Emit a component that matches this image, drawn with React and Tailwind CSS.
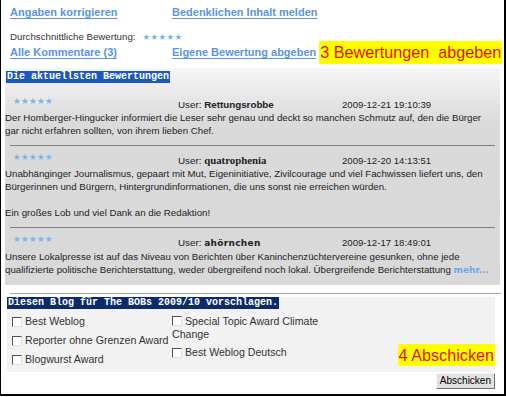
import React from "react";

const Stars = () => (
  <span className="font-['DejaVu_Sans',sans-serif] text-[8.5px] leading-[8px] tracking-[0.4px] text-[#7fb0ee]">
    ★★★★★
  </span>
);

const Comment = ({ user, userClass, date, children, pt = "pt-[5px]", sep = true }) => (
  <div className={pt}>
    <div className="flex items-start">
      <div className="w-[173px] pl-[8px] leading-[8px]">
        <Stars />
      </div>
      <div className="w-[164px] mt-[3px] text-[9.8px] leading-[13px] text-[#222]">
        User: <span className={userClass}>{user}</span>
      </div>
      <div className="mt-[3px] text-[9.6px] leading-[13px] text-[#222]">{date}</div>
    </div>
    <p className="text-[9.7px] leading-[13px] text-[#222] whitespace-nowrap">{children}</p>
    <div className="pb-[8px]" />
    {sep && <div className="mx-[5px] h-px bg-[#7f7f7f]" />}
  </div>
);

const Box = () => (
  <span className="inline-block w-[10px] h-[10px] bg-white border border-t-[#505050] border-l-[#505050] border-b-[#e0e0e0] border-r-[#e0e0e0] align-[-1px]" />
);

const Option = ({ children }) => (
  <label className="flex items-center gap-[3px] h-[13px]">
    <Box />
    <span>{children}</span>
  </label>
);

const linkCls =
  "font-bold text-[11px] leading-[14px] text-[#5a96dc] underline underline-offset-2";

export default function App() {
  return (
    <div className="w-[506px] h-[396px] bg-white border-l border-r-2 border-b-2 border-black font-['Liberation_Sans',Arial,sans-serif]">
      {/* top links */}
      <div className="pl-[9px] pt-[5px]">
        <div className="flex h-[14px] items-center">
          <a href="#" className={`w-[162px] ${linkCls}`}>Angaben korrigieren</a>
          <a href="#" className={linkCls}>Bedenklichen Inhalt melden</a>
        </div>
        <div className="mt-[12px] flex items-center h-[12px] text-[9.7px] text-[#333]">
          <span className="mr-[7px]">Durchschnittliche Bewertung:</span>
          <Stars />
        </div>
        <div className="-mt-[3px] flex items-center h-[24px]">
          <a href="#" className={`w-[162px] ${linkCls}`}>Alle Kommentare (3)</a>
          <a href="#" className={linkCls}>Eigene Bewertung abgeben</a>
          <span className="ml-[3px] bg-[#ffff00] text-[#e01000] text-[16.2px] leading-[23px] px-[1px] whitespace-pre">
            3 Bewertungen  abgeben
          </span>
        </div>
      </div>

      {/* latest ratings */}
      <div className="mt-[4px] ml-[4px] w-[495px] pt-[3px] bg-[linear-gradient(#f6f6f6,#dadada_55px,#d9d9d9)]">
        <div className="ml-[1px] w-fit px-[1px] h-[12px] bg-[#1f58bb] text-white font-['Liberation_Mono',monospace] font-bold text-[10px] leading-[12px]">
          Die aktuellsten Bewertungen
        </div>
        <Comment pt="pt-[12px]" user="Rettungsrobbe" userClass="font-bold" date="2009-12-21 19:10:39">
          Der Homberger-Hingucker informiert die Leser sehr genau und deckt so manchen Schmutz auf, den die Bürger
          <br />
          gar nicht erfahren sollten, von ihrem lieben Chef.
        </Comment>
        <Comment
          user="quatrophenia"
          userClass="font-bold font-['Liberation_Serif',serif] text-[10.8px]"
          date="2009-12-20 14:13:51"
        >
          Unabhänginger Journalismus, gepaart mit Mut, Eigeninitiative, Zivilcourage und viel Fachwissen liefert uns, den
          <br />
          Bürgerinnen und Bürgern, Hintergrundinformationen, die uns sonst nie erreichen würden.
          <br />
          <br />
          Ein großes Lob und viel Dank an die Redaktion!
        </Comment>
        <Comment
          user="ahörnchen"
          userClass="font-bold font-['DejaVu_Sans',sans-serif] text-[9px] tracking-[0.3px]"
          date="2009-12-17 18:49:01"
          sep={false}
        >
          Unsere Lokalpresse ist auf das Niveau von Berichten über Kaninchenzüchtervereine gesunken, ohne jede
          <br />
          qualifizierte politische Berichterstattung, weder übergreifend noch lokal. Übergreifende Berichterstattung{" "}
          <a href="#" className="font-bold text-[#6fa6ea] font-['DejaVu_Sans',sans-serif] text-[9px]">mehr...</a>
        </Comment>
      </div>

      <div className="mt-[8px] ml-[9px] w-[491px] h-px bg-[#a8a8a8]" />

      {/* BOBs nomination */}
      <div className="mt-[3px] ml-[6px] w-[488px] bg-[#f2f2f2]">
        <div className="w-fit px-[1px] h-[12px] bg-[#0b2b6d] text-white font-['Liberation_Mono',monospace] font-bold text-[10px] leading-[12px]">
          Diesen Blog für The BOBs 2009/10 vorschlagen.
        </div>
        <div className="flex text-[10.6px] text-[#333] pb-[6px]">
          <div className="w-[165px] pl-[5px] pt-[6px] flex flex-col gap-[6px]">
            <Option>Best Weblog</Option>
            <Option>Reporter ohne Grenzen Award</Option>
            <Option>Blogwurst Award</Option>
          </div>
          <div className="pt-[6px] flex flex-col gap-[5px]">
            <div className="leading-[13px]">
              <Box /> Special Topic Award Climate
              <br />
              Change
            </div>
            <Option>Best Weblog Deutsch</Option>
          </div>
          <div className="flex-1 flex items-end justify-end">
            <span className="bg-[#ffff00] text-[#e01000] text-[16.2px] leading-[22px] px-[1px]">4 Abschicken</span>
          </div>
        </div>
      </div>
      <div className="ml-[6px] w-[488px] flex justify-end mt-px">
        <button className="h-[16px] px-[3px] bg-[#e2e2e2] border border-t-[#f4f4f4] border-l-[#f4f4f4] border-b-[#6f6f6f] border-r-[#6f6f6f] text-[10px] leading-[12px] text-black">
          Abschicken
        </button>
      </div>
    </div>
  );
}
